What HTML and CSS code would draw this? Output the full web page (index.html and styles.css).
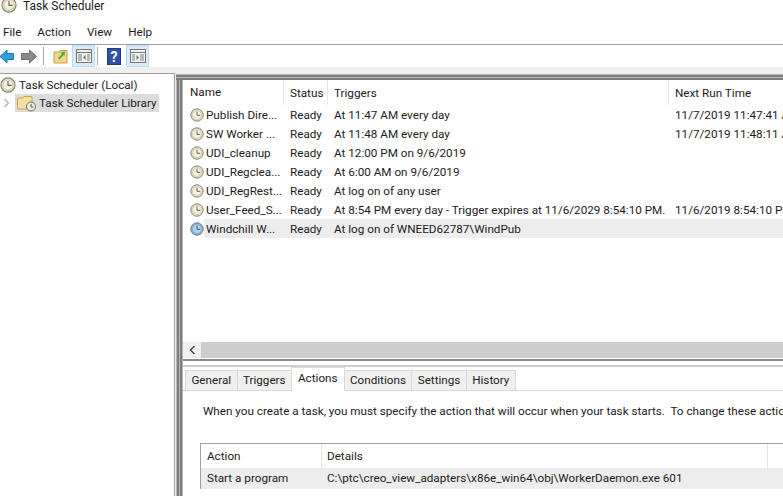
FILE: index.html
```html
<!DOCTYPE html>
<html lang="en">
<head>
    <meta charset="UTF-8">
    <title>Task Scheduler</title>
    <link rel="stylesheet" href="styles.css">
</head>
<body>
    <svg class="defs" width="0" height="0">
        <defs>
            <symbol id="clock" viewBox="0 0 14 14">
                <circle cx="7" cy="7" r="6.2" fill="#e6e0c8" stroke="#8b8672"/>
                <circle cx="7" cy="7" r="4.4" fill="#f4f1e4" stroke="#c4bc98" stroke-width=".6"/>
                <path d="M7 3.6V7.3H10.2" fill="none" stroke="#6b6658" stroke-width="1"/>
            </symbol>
            <symbol id="clock-blue" viewBox="0 0 14 14">
                <circle cx="7" cy="7" r="6.2" fill="#8db4d2" stroke="#5c7f9c"/>
                <circle cx="7" cy="7" r="4.4" fill="#b4d0e6" stroke="#7fa6c4" stroke-width=".6"/>
                <path d="M7 3.6V7.3H10.2" fill="none" stroke="#3f5a72" stroke-width="1"/>
            </symbol>
        </defs>
    </svg>

    <div class="titlebar">
        <svg class="app-icon" width="16" height="16"><use href="#clock"/></svg>
        <span>Task Scheduler</span>
    </div>

    <div class="menubar">
        <span>File</span>
        <span>Action</span>
        <span>View</span>
        <span>Help</span>
    </div>

    <div class="toolbar">
        <svg class="tool-back" width="14" height="15" viewBox="0 0 14 15"><path d="M0 7.500L7 1V4.500H13.500V10.500H7V14Z" fill="#2f9fe0" stroke="#1a78b8"/></svg>
        <svg class="tool-next" width="16" height="15" viewBox="0 0 16 15"><path d="M15.500 7.500L8.500 1V4.500H.5V10.500H8.500V14Z" fill="#8a8a8a" stroke="#6e6e6e"/></svg>
        <i class="tool-sep"></i>
        <svg class="tool-folder" width="16" height="16" viewBox="0 0 16 16"><path d="M1 4H6L7 2.500H14V15H1Z" fill="#f2d68c" stroke="#c2a050"/><path d="M5 10L9 6L7.500 4.500L12 3.500L11.500 8L10.500 7L6.500 11.500Z" fill="#3fae3a"/></svg>
        <span class="tool-on">
            <svg width="16" height="14" viewBox="0 0 16 14"><rect x=".5" y=".5" width="15" height="13" fill="#f2f2f2" stroke="#777"/><path d="M.5 3.500H15.500" stroke="#777"/><rect x="2" y="5" width="4" height="7" fill="#b8b8b8"/><rect x="11" y="5" width="3" height="7" fill="#b8b8b8"/><path d="M9.500 6V11L7 8.500Z" fill="#3a9a3a"/></svg>
        </span>
        <i class="tool-sep tool-sep2"></i>
        <svg class="tool-help" width="14" height="17" viewBox="0 0 14 17"><rect x=".5" y=".5" width="13" height="16" fill="#3350a8" stroke="#24387c"/><text x="7" y="14" text-anchor="middle" fill="#fff" class="help-mark">?</text></svg>
        <span class="tool-on">
            <svg width="16" height="14" viewBox="0 0 16 14"><rect x=".5" y=".5" width="15" height="13" fill="#f2f2f2" stroke="#777"/><path d="M.5 3.500H15.500" stroke="#777"/><rect x="2" y="5" width="3" height="7" fill="#b8b8b8"/><rect x="10" y="5" width="4" height="7" fill="#b8b8b8"/><path d="M6.500 6V11L9 8.500Z" fill="#3a9a3a"/></svg>
        </span>
    </div>

    <div class="workspace">
        <!-- tree on the left -->
        <div class="tree">
            <div class="tree-row">
                <svg width="16" height="16"><use href="#clock"/></svg>
                <span>Task Scheduler (Local)</span>
            </div>
            <div class="tree-row tree-child">
                <svg class="chevron" width="7" height="10" viewBox="0 0 7 10"><path d="M1.500 1L5.500 5L1.500 9" fill="none" stroke="#b4b4b4" stroke-width="1.300"/></svg>
                <div class="tree-label">
                    <svg width="20" height="17" viewBox="0 0 20 17"><path d="M.5 3H6L7 1.500H15V14H.5Z" fill="#f5df9c" stroke="#c9a94f"/><circle cx="14" cy="11.500" r="4.500" fill="#efeee4" stroke="#6f6c5c"/><path d="M14 9V12H16.500" fill="none" stroke="#555"/></svg>
                    <span>Task Scheduler Library</span>
                </div>
            </div>
        </div>

        <div class="main">
            <div class="sash-top"></div>

            <!-- task list -->
            <div class="pane list-pane">
                <div class="task-list">
                    <div class="task-head">
                        <span class="col-name">Name</span>
                        <span class="col-status">Status</span>
                        <span class="col-trigger">Triggers</span>
                        <span class="col-next">Next Run Time</span>
                    </div>
                    <div class="task-row">
                        <span class="col-name"><svg width="14" height="14"><use href="#clock"/></svg>Publish Dire...</span>
                        <span class="col-status">Ready</span>
                        <span class="col-trigger">At 11:47 AM every day</span>
                        <span class="col-next">11/7/2019 11:47:41 AM</span>
                    </div>
                    <div class="task-row">
                        <span class="col-name"><svg width="14" height="14"><use href="#clock"/></svg>SW Worker ...</span>
                        <span class="col-status">Ready</span>
                        <span class="col-trigger">At 11:48 AM every day</span>
                        <span class="col-next">11/7/2019 11:48:11 AM</span>
                    </div>
                    <div class="task-row">
                        <span class="col-name"><svg width="14" height="14"><use href="#clock"/></svg>UDI_cleanup</span>
                        <span class="col-status">Ready</span>
                        <span class="col-trigger">At 12:00 PM on 9/6/2019</span>
                        <span class="col-next"></span>
                    </div>
                    <div class="task-row">
                        <span class="col-name"><svg width="14" height="14"><use href="#clock"/></svg>UDI_Regclea...</span>
                        <span class="col-status">Ready</span>
                        <span class="col-trigger">At 6:00 AM on 9/6/2019</span>
                        <span class="col-next"></span>
                    </div>
                    <div class="task-row">
                        <span class="col-name"><svg width="14" height="14"><use href="#clock"/></svg>UDI_RegRest...</span>
                        <span class="col-status">Ready</span>
                        <span class="col-trigger">At log on of any user</span>
                        <span class="col-next"></span>
                    </div>
                    <div class="task-row">
                        <span class="col-name"><svg width="14" height="14"><use href="#clock"/></svg>User_Feed_S...</span>
                        <span class="col-status">Ready</span>
                        <span class="col-trigger">At 8:54 PM every day - Trigger expires at 11/6/2029 8:54:10 PM.</span>
                        <span class="col-next">11/6/2019 8:54:10 PM</span>
                    </div>
                    <div class="task-row task-selected">
                        <span class="col-name"><svg width="14" height="14"><use href="#clock-blue"/></svg>Windchill W...</span>
                        <span class="col-status">Ready</span>
                        <span class="col-trigger">At log on of WNEED62787\WindPub</span>
                        <span class="col-next"></span>
                    </div>
                </div>
                <div class="hscroll">
                    <span class="scroll-btn"><svg width="7" height="10" viewBox="0 0 7 10"><path d="M5.500 1L1.500 5L5.500 9" fill="none" stroke="#444" stroke-width="1.400"/></svg></span>
                </div>
            </div>

            <div class="sash-mid"></div>

            <!-- details -->
            <div class="pane detail-pane">
                <div class="tabs">
                    <span class="tab">General</span>
                    <span class="tab">Triggers</span>
                    <span class="tab tab-active">Actions</span>
                    <span class="tab">Conditions</span>
                    <span class="tab">Settings</span>
                    <span class="tab">History</span>
                </div>
                <div class="tab-body">
                    <p class="tab-intro">When you create a task, you must specify the action that will occur when your task starts.&nbsp; To change these actions, open the task property pages.</p>
                    <div class="action-table">
                        <div class="action-head">
                            <span class="col-action">Action</span>
                            <span class="col-details">Details</span>
                            <span class="col-rest"></span>
                        </div>
                        <div class="action-row">
                            <span class="col-action">Start a program</span>
                            <span class="col-details">C:\ptc\creo_view_adapters\x86e_win64\obj\WorkerDaemon.exe 601</span>
                        </div>
                    </div>
                </div>
            </div>
        </div>
    </div>
</body>
</html>
```

FILE: styles.css
```css
html, body {
    margin: 0;
    height: 100%;
    overflow: hidden;
}
body {
    font-family: Roboto, "Noto Sans", sans-serif;
    font-size: 11.7px;
    color: #1c1c1c;
    background-color: #fff;
    display: flex;
    flex-direction: column;
}
span, p {
    white-space: nowrap;
}
svg {
    flex: none;
    display: block;
}
.defs {
    position: absolute;
}

.titlebar {
    height: 22px;
    display: flex;
    align-items: flex-start;
    gap: 6px;
    font-size: 12px;
    line-height: 12px;
    flex: none;
}
.app-icon {
    margin-top: -3px;
    margin-left: 1px;
}

.menubar {
    height: 20px;
    padding: 0 0 2px 3px;
    display: flex;
    align-items: center;
    gap: 16px;
    border-bottom: 1px solid #a0a0a0;
    flex: none;
}

.toolbar {
    height: 22px;
    display: flex;
    align-items: center;
    background-color: #fff;
    flex: none;
}
.tool-next {
    margin-left: 7px;
}
.tool-sep {
    width: 1px;
    height: 18px;
    background-color: #a8a8a8;
    margin: 0 9px 0 6px;
}
.tool-sep2 {
    margin-left: 2px;
}
.tool-folder {
    margin-right: 3px;
}
.tool-on {
    width: 23px;
    height: 22px;
    display: flex;
    align-items: center;
    justify-content: center;
    background-color: #d9eaf9;
    border: 1px solid #bcdcf4;
    box-sizing: border-box;
}
.tool-help {
    margin-right: 5px;
}
.help-mark {
    font-size: 14px;
    font-weight: bold;
}

.workspace {
    flex: 1;
    display: flex;
    min-height: 0;
    background-color: #f0f0f0;
    padding-top: 6px;
}
.tree {
    width: 175px;
    flex: none;
    background-color: #fff;
    border-top: 1px solid #a0a0a0;
    border-right: 1px solid #a0a0a0;
    box-sizing: border-box;
    padding-top: 2px;
}
.tree-row {
    display: flex;
    align-items: center;
    height: 18px;
    gap: 3px;
}
.tree-child {
    padding-left: 3px;
    gap: 5px;
}
.tree-label {
    height: 18px;
    width: 144px;
    flex: none;
    display: flex;
    align-items: center;
    gap: 2px;
    padding-left: 2px;
    box-sizing: border-box;
    background-color: #dcdcdc;
}

/* grey splitter stripes run down the left of the panes */
.main {
    flex: 1;
    min-width: 0;
    display: flex;
    flex-direction: column;
    margin: 1px 0 0 1px;
    padding-left: 7px;
    background: repeating-linear-gradient(to right, #b8b8b8 0, #b8b8b8 1px, #7d7d7d 1px, #7d7d7d 3px);
    background-color: #7d7d7d;
}
.sash-top {
    height: 6px;
    flex: none;
    margin-left: -7px;
    background: repeating-linear-gradient(to bottom, #b8b8b8 0, #b8b8b8 1px, #7d7d7d 1px, #7d7d7d 3px);
}
.sash-mid {
    height: 8px;
    flex: none;
    box-sizing: border-box;
    background-color: #fff;
    border-top: 2px solid #8a8a8a;
    border-bottom: 2px solid #cfcfcf;
}
.pane {
    background-color: #fff;
    overflow: hidden;
}
.list-pane {
    height: 279px;
    flex: none;
    display: flex;
    flex-direction: column;
}
.task-list {
    flex: 1;
    padding-left: 2px;
}
.task-head,
.task-row {
    display: flex;
    align-items: center;
    width: 700px;
}
.task-head {
    height: 25px;
}
.task-head span {
    height: 100%;
    line-height: 27px;
    border-right: 1px solid #e5e5e5;
}
.task-row {
    height: 19px;
}
.col-name {
    width: 99px;
    flex: none;
    padding-left: 5px;
    box-sizing: border-box;
    display: flex;
    align-items: center;
    gap: 2px;
    overflow: hidden;
}
.col-status {
    width: 44px;
    flex: none;
    padding-left: 6px;
    box-sizing: border-box;
}
.col-trigger {
    width: 341px;
    flex: none;
    padding-left: 6px;
    box-sizing: border-box;
    overflow: hidden;
}
.col-next {
    flex: none;
    padding-left: 6px;
    width: 200px;
    box-sizing: border-box;
}
.task-head .col-next {
    border-right: 0;
}
.task-selected {
    background: linear-gradient(#ededed, #ededed) 19px 0 no-repeat;
}
.hscroll {
    height: 16px;
    flex: none;
    background-color: #cdcdcd;
    margin-bottom: 1px;
    display: flex;
}
.scroll-btn {
    width: 18px;
    display: flex;
    align-items: center;
    justify-content: center;
    background-color: #f0f0f0;
}

.detail-pane {
    flex: 1;
    min-height: 0;
    display: flex;
    flex-direction: column;
}
.tabs {
    display: flex;
    align-items: flex-end;
    height: 23px;
    padding-left: 2px;
    border-bottom: 1px solid #d9d9d9;
    flex: none;
}
.tab {
    height: 20px;
    line-height: 19px;
    padding: 0 5.4px;
    background-color: #f0f0f0;
    border: 1px solid #d9d9d9;
    border-bottom: 0;
    margin-right: -1px;
    box-sizing: border-box;
}
.tab-active {
    height: 24px;
    line-height: 20px;
    background-color: #fff;
    margin-bottom: -1px;
    padding: 0 6px;
    position: relative;
}
.tab-body {
    flex: 1;
    padding: 12px 0 0 17px;
}
.tab-intro {
    margin: 0 0 24px 3px;
    line-height: 16px;
}
.action-table {
    width: 800px;
    border-top: 1px solid #a0a0a0;
    border-left: 1px solid #a0a0a0;
}
.action-head,
.action-row {
    display: flex;
    align-items: center;
}
.action-head {
    height: 24px;
}
.action-head span {
    height: 100%;
    line-height: 24px;
    border-right: 1px solid #e5e5e5;
}
.action-row {
    height: 21px;
    padding-bottom: 1px;
    box-sizing: border-box;
    background-color: #ededed;
}
.col-action {
    width: 121px;
    flex: none;
    padding-left: 6px;
    box-sizing: border-box;
}
.col-details {
    width: 446px;
    flex: none;
    padding-left: 5px;
    box-sizing: border-box;
}
.col-rest {
    flex: 1;
}
```
